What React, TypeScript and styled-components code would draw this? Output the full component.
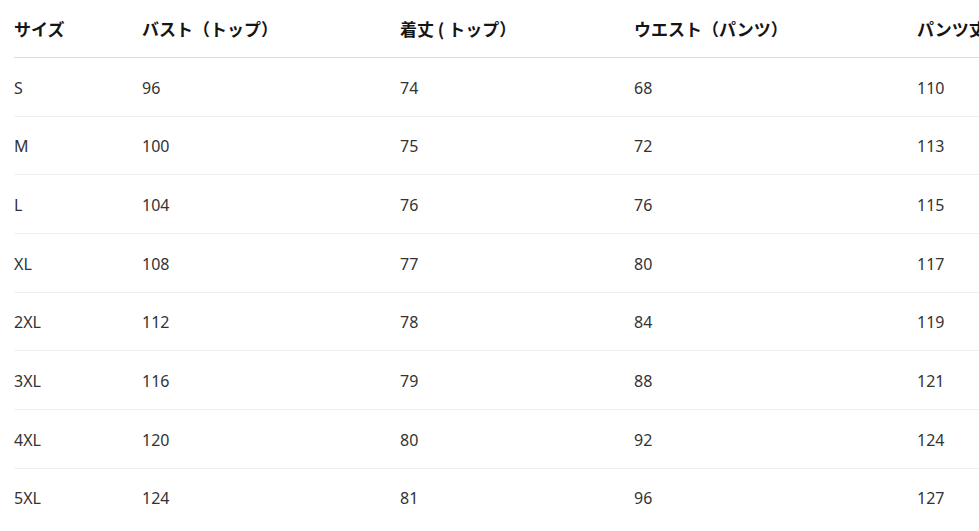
import React from "react";
import styled, { createGlobalStyle } from "styled-components";

const Global = createGlobalStyle`
  html, body { margin: 0; padding: 0; background: #fff; overflow: hidden; }
  body { font-family: "Noto Sans", "Noto Sans CJK JP", sans-serif; color: #222; }
`;

const Wrap = styled.div`
  padding-left: 14px;
  width: 1200px;
`;

const Table = styled.table`
  border-collapse: collapse;
  table-layout: fixed;
  width: 1100px;
`;

const Col = styled.col<{ $w: number }>`
  width: ${(p) => p.$w}px;
`;

const Th = styled.th`
  text-align: left;
  font-weight: 700;
  font-size: 17px;
  height: 57px;
  padding: 0;
  vertical-align: middle;
  border-bottom: 1px solid #dcdcdc;
  white-space: nowrap;
  color: #151515;
  font-family: "Noto Sans CJK JP", sans-serif;
`;

const Td = styled.td`
  font-size: 16px;
  height: 55.67px;
  padding: 2px 0 0 0;
  vertical-align: middle;
  white-space: nowrap;
  color: #333;
`;

const Tr = styled.tr<{ $last?: boolean }>`
  border-bottom: ${(p) => (p.$last ? "none" : "1px solid #efefef")};
`;

const headers = ["サイズ", "バスト（トップ）", "着丈 ( トップ）", "ウエスト（パンツ）", "パンツ丈"];
const rows = [
  ["S", "96", "74", "68", "110"],
  ["M", "100", "75", "72", "113"],
  ["L", "104", "76", "76", "115"],
  ["XL", "108", "77", "80", "117"],
  ["2XL", "112", "78", "84", "119"],
  ["3XL", "116", "79", "88", "121"],
  ["4XL", "120", "80", "92", "124"],
  ["5XL", "124", "81", "96", "127"],
];

export default function App() {
  return (
    <Wrap>
      <Global />
      <Table>
        <colgroup>
          <Col $w={128} />
          <Col $w={258} />
          <Col $w={234} />
          <Col $w={283} />
          <Col $w={197} />
        </colgroup>
        <thead>
          <Tr>
            {headers.map((h) => (
              <Th key={h}>{h}</Th>
            ))}
          </Tr>
        </thead>
        <tbody>
          {rows.map((r, i) => (
            <Tr key={r[0]} $last={i === rows.length - 1}>
              {r.map((c, j) => (
                <Td key={j}>{c}</Td>
              ))}
            </Tr>
          ))}
        </tbody>
      </Table>
    </Wrap>
  );
}
